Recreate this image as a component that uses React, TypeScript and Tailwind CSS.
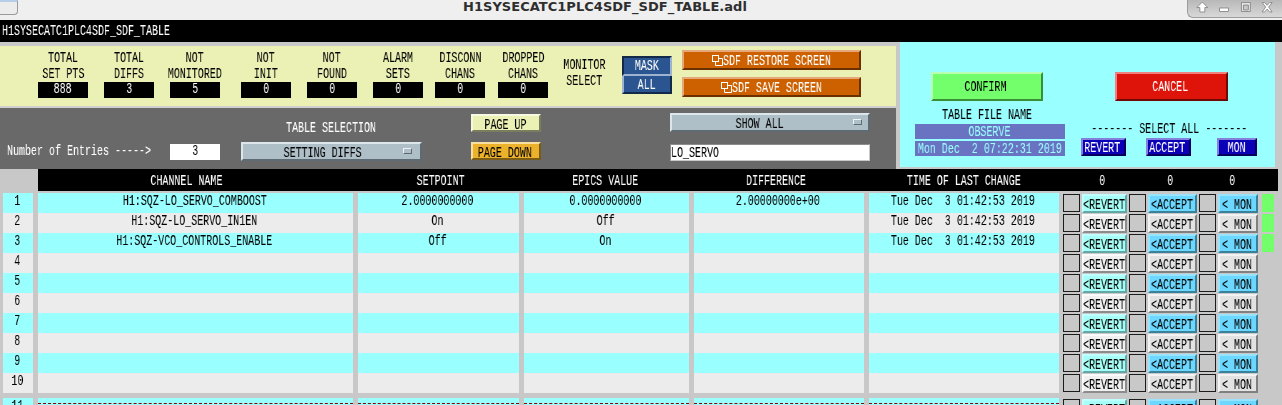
const T = ({ children, left }: { children: React.ReactNode; left?: boolean }) =>
    left ? (
        <span className="inline-block whitespace-pre origin-left scale-x-[.714] translate-y-px will-change-transform [-webkit-text-stroke:0.05px]">{children}</span>
    ) : (
        <span className="inline-flex w-0 justify-center">
            <span className="shrink-0 whitespace-pre scale-x-[.714] translate-y-px will-change-transform [-webkit-text-stroke:0.05px]">{children}</span>
        </span>
    )

const cloneIcon = (
    <svg width="11" height="11" viewBox="0 0 11 11" fill="none" stroke="white" strokeWidth="1" className="shrink-0">
        <rect x="0.5" y="0.5" width="6" height="6" />
        <path d="M7 3.5h3.5v7h-7V7" />
    </svg>
)

function Stat({ top, bottom, value, className }: { top: string; bottom: string; value: string; className: string }) {
    return (
        <div className={`w-[50px] flex flex-col items-center ${className}`}>
            <div className="h-[16px] leading-[16px]"><T>{top}</T></div>
            <div className="h-[16px] leading-[16px]"><T>{bottom}</T></div>
            <div className="mt-px w-[50px] h-[16px] bg-black text-white text-center leading-[13px]"><T>{value}</T></div>
        </div>
    )
}

const stats = [
    { top: "TOTAL", bottom: "SET PTS", value: "888", className: "ml-[38px]" },
    { top: "TOTAL", bottom: "DIFFS", value: "3", className: "ml-[16px]" },
    { top: "NOT", bottom: "MONITORED", value: "5", className: "ml-[16px]" },
    { top: "NOT", bottom: "INIT", value: "0", className: "ml-[21px]" },
    { top: "NOT", bottom: "FOUND", value: "0", className: "ml-[16px]" },
    { top: "ALARM", bottom: "SETS", value: "0", className: "ml-[16px]" },
    { top: "DISCONN", bottom: "CHANS", value: "0", className: "ml-[12px]" },
    { top: "DROPPED", bottom: "CHANS", value: "0", className: "ml-[13px]" },
]

const rows = [
    { n: "1", name: "H1:SQZ-LO_SERVO_COMBOOST", set: "2.0000000000", epics: "0.0000000000", diff: "2.00000000e+00", time: "Tue Dec  3 01:42:53 2019" },
    { n: "2", name: "H1:SQZ-LO_SERVO_IN1EN", set: "On", epics: "Off", diff: "", time: "Tue Dec  3 01:42:53 2019" },
    { n: "3", name: "H1:SQZ-VCO_CONTROLS_ENABLE", set: "Off", epics: "On", diff: "", time: "Tue Dec  3 01:42:53 2019" },
    { n: "4" }, { n: "5" }, { n: "6" }, { n: "7" }, { n: "8" }, { n: "9" }, { n: "10" },
]

function Box() {
    return <div className="w-[17px] h-[18px] mt-px bg-[#c8c8c8] border border-[#1c1c1c] shrink-0" />
}

function RowButtons({ odd }: { odd: boolean }) {
    const revert = odd
        ? "bg-[#a6fff6] border-t-[#c0ffff] border-l-[#c0ffff] border-r-[#5fa8a8] border-b-[#5fa8a8]"
        : "bg-[#f0f0f0] border-t-[#fafafa] border-l-[#fafafa] border-r-[#8c8c8c] border-b-[#8c8c8c]"
    const other = odd
        ? "bg-[#6cd8ff] border-t-[#98e4ff] border-l-[#98e4ff] border-r-[#38819c] border-b-[#38819c]"
        : "bg-[#e2e2e2] border-t-[#f2f2f2] border-l-[#f2f2f2] border-r-[#808080] border-b-[#808080]"
    return (
        <>
            <div className="ml-[4px]"><Box /></div>
            <div className={`ml-[2px] w-[45px] h-[19px] mt-px border-2 leading-[17px] ${revert}`}><span className="block -ml-px"><T left>{"<REVERT"}</T></span></div>
            <div className="ml-[2px]"><Box /></div>
            <div className={`ml-[2px] w-[49px] h-[19px] mt-px border-2 pl-px leading-[17px] ${other}`}><T left>{"<ACCEPT"}</T></div>
            <div className="ml-[2px]"><Box /></div>
            <div className={`ml-[2px] w-[40px] h-[19px] mt-px border-2 pl-[2px] leading-[17px] ${other}`}><T left>{"< MON"}</T></div>
        </>
    )
}

function Row({ row, odd, green, dashed }: { row: any; odd: boolean; green?: boolean; dashed?: boolean }) {
    const bg = odd ? "bg-[#99ffff]" : "bg-[#ececec]"
    const cell = `h-5 text-center overflow-hidden shrink-0 pr-[2px] ${bg}`
    const line = dashed ? "border-b border-dashed border-[#8b0000] h-[6px] -mr-[2px]" : ""
    return (
        <div className="flex h-5 leading-[14px] text-black">
            <div className={`ml-[3px] w-[30px] ${cell}`}><T>{row.n}</T></div>
            <div className={`ml-[5px] w-[315px] ${cell}`}>{dashed ? <div className={line} /> : <T>{row.name}</T>}</div>
            <div className={`ml-[5px] w-[161px] ${cell}`}>{dashed ? <div className={line} /> : <T>{row.set}</T>}</div>
            <div className={`ml-[5px] w-[165px] ${cell}`}>{dashed ? <div className={line} /> : <T>{row.epics}</T>}</div>
            <div className={`ml-[5px] w-[170px] ${cell}`}>{dashed ? <div className={line} /> : <T>{row.diff}</T>}</div>
            <div className={`ml-[5px] w-[190px] ${cell}`}>{dashed ? <div className={line} /> : <T>{row.time}</T>}</div>
            <RowButtons odd={odd} />
            {green && <div className="ml-[4px] w-[12px] h-[18px] mt-px bg-[#73ff6b]" />}
        </div>
    )
}

export default function App() {
    return (
        <div className="w-[1282px] h-[405px] overflow-hidden bg-[#c8c8c8] font-['Liberation_Mono',monospace] text-[14px] leading-[14px] text-black">
            {/* window title bar */}
            <div className="h-5 bg-[#efefef] flex items-start relative">
                <div className="w-[18px] h-[15px] bg-[#ececec] border-r border-b border-t-2 border-t-[#b5cde8] border-[#9a9a9a] rounded-br-sm shrink-0" />
                <div className="w-[1174px] text-center font-['DejaVu_Sans',sans-serif] font-bold text-[13px] leading-[14px] tracking-[0.03px] text-[#2e2e2e]">H1SYSECATC1PLC4SDF_SDF_TABLE.adl</div>
                <div className="absolute right-0 top-0 w-[95px] h-[18px] bg-gradient-to-b from-[#b8b8b8] to-[#d8d8d8] border-l border-b border-[#9c9c9c] rounded-bl-md flex items-center text-white">
                    <svg width="95" height="16" viewBox="0 0 95 16" fill="white" stroke="#6e6e6e" strokeWidth="0.7">
                        <path d="M14.500 1l5.500 5.500h-3v4.500h-5v-4.500h-3z" />
                        <rect x="32" y="7" width="9" height="3.500" />
                        <path fillRule="evenodd" d="M54 1.500h9v9h-9zM56 4v5h5V4z" fill="#e8e8e8" />
                        <path d="M75 1.500h2.500l2.500 2.800 2.500-2.800H85l-3.500 4.500 3.500 5h-2.500L80 8l-2.500 3H75l3.500-5z" />
                    </svg>
                </div>
            </div>

            {/* black name bar */}
            <div className="h-[22px] bg-black text-white leading-[20px] pl-[2px]"><T left>H1SYSECATC1PLC4SDF_SDF_TABLE</T></div>

            {/* control panels */}
            <div className="flex h-[125px]">
                <div className="w-[896px] pt-1">
                    <div className="h-[60px] bg-[#ebf1b5] flex pt-[3px]">
                        {stats.map((s) => <Stat key={s.top + s.bottom} {...s} />)}
                        <div className="ml-[10px] w-[52px] pt-[7px] flex flex-col items-center leading-[16px]">
                            <T>MONITOR</T>
                            <T>SELECT</T>
                        </div>
                        <div className="ml-[12px] w-[50px] pt-[7px]">
                            <div className="h-[20px] bg-[#2a5590] border-2 border-[#12294a] text-white text-center leading-[15px] border-r-[#9db3d0] border-b-[#9db3d0]"><T>MASK</T></div>
                            <div className="h-[18px] bg-[#2a5590] border-2 border-[#12294a] text-white text-center leading-[16px] border-l-[#9db3d0] border-t-0"><T>ALL</T></div>
                        </div>
                        <div className="ml-[10px] w-[179px] pt-px flex flex-col gap-[7px]">
                            <div className="h-[20px] bg-[#cd6100] border-2 border-t-[#e6a878] border-l-[#e6a878] border-r-[#6b3000] border-b-[#6b3000] text-white flex justify-center items-center">
                                {cloneIcon}<span className="w-[108px] h-[14px]"><T left>SDF RESTORE SCREEN</T></span>
                            </div>
                            <div className="h-[20px] bg-[#cd6100] border-2 border-t-[#e6a878] border-l-[#e6a878] border-r-[#6b3000] border-b-[#6b3000] text-white flex justify-center items-center">
                                {cloneIcon}<span className="w-[90px] h-[14px]"><T left>SDF SAVE SCREEN</T></span>
                            </div>
                        </div>
                    </div>
                    <div className="h-[2px] bg-[#d0d0d0]" />
                    <div className="h-[61px] bg-[#696969] flex">
                        <div className="w-[170px] pl-[7px] pt-[35px] text-white"><T left>Number of Entries -----&gt;</T></div>
                        <div className="w-[50px] h-[16px] mt-[36px] bg-white text-center leading-[12px]"><T>3</T></div>
                        <div className="ml-[21px] w-[181px] pt-[12px] flex flex-col">
                            <div className="text-white text-center"><T>TABLE SELECTION</T></div>
                            <div className="mt-[8px] h-[19px] bg-[#aebfc7] border-2 border-t-[#dde6ea] border-l-[#dde6ea] border-r-[#5e6b72] border-b-[#5e6b72] flex items-center relative justify-center pr-[18px]">
                                <T>SETTING DIFFS</T>
                                <span className="absolute right-[8px] top-[4px] w-[9px] h-[6px] bg-[#aebfc7] border border-t-[#eef2f4] border-l-[#eef2f4] border-r-[#5e6b72] border-b-[#5e6b72]" />
                            </div>
                        </div>
                        <div className="ml-[49px] w-[70px] pt-[6px] flex flex-col gap-[10px]">
                            <div className="h-[18px] bg-[#ebf1b5] border-2 border-t-[#f7f9e0] border-l-[#f7f9e0] border-r-[#7b7e5e] border-b-[#7b7e5e] text-center leading-[16px] pr-[2px]"><T>PAGE UP</T></div>
                            <div className="h-[18px] bg-[#edb22c] border-2 border-t-[#f8dea0] border-l-[#f8dea0] border-r-[#7b5c16] border-b-[#7b5c16] text-center leading-[16px] pr-[2px]"><T>PAGE DOWN</T></div>
                        </div>
                        <div className="ml-[129px] w-[200px] pt-[5px]">
                            <div className="h-[19px] bg-[#aebfc7] border-2 border-t-[#dde6ea] border-l-[#dde6ea] border-r-[#5e6b72] border-b-[#5e6b72] flex items-center justify-center relative pr-[20px]">
                                <T>SHOW ALL</T>
                                <span className="absolute right-[6px] top-[4px] w-[9px] h-[6px] bg-[#aebfc7] border border-t-[#eef2f4] border-l-[#eef2f4] border-r-[#5e6b72] border-b-[#5e6b72]" />
                            </div>
                            <div className="mt-[12px] h-[17px] bg-white border border-t-[#8c8c8c] border-l-[#8c8c8c] border-r-[#c8c8c8] border-b-[#c8c8c8] leading-[14px]"><T left>LO_SERVO</T></div>
                        </div>
                    </div>
                </div>

                <div className="ml-[4px] w-[375px] h-[125px] bg-[#99ffff] flex pl-[15px] pt-[30px]">
                    <div className="w-[150px] flex flex-col">
                        <div className="ml-[16px] w-[112px] h-[29px] bg-[#73ff6b] border-2 border-t-[#b8ffb4] border-l-[#b8ffb4] border-r-[#3a8f36] border-b-[#3a8f36] text-center leading-[24px] pr-[4px]"><T>CONFIRM</T></div>
                        <div className="mt-[6px] h-[16px] text-center leading-[14px] pr-[6px]"><T>TABLE FILE NAME</T></div>
                        <div className="mt-[1px] h-[15px] bg-[#6a73c1] text-[#99ffff] text-center leading-[14px] pr-px"><T>OBSERVE</T></div>
                        <div className="mt-[2px] h-[15px] bg-[#6a73c1] text-[#99ffff] text-center leading-[14px] pr-px"><T>Mon Dec  2 07:22:31 2019</T></div>
                    </div>
                    <div className="ml-[16px] w-[176px] flex flex-col">
                        <div className="ml-[34px] w-[113px] h-[29px] bg-[#de1309] border-2 border-t-[#f08080] border-l-[#f08080] border-r-[#6f0905] border-b-[#6f0905] text-white text-center leading-[24px] pr-[2px]"><T>CANCEL</T></div>
                        <div className="mt-[20px] h-[16px] text-center leading-[14px]"><T>------- SELECT ALL -------</T></div>
                        <div className="mt-[1px] flex text-white">
                            <div className="w-[45px] h-[18px] bg-[#0a00b8] border-2 border-t-[#8480dc] border-l-[#8480dc] border-r-[#05005c] border-b-[#05005c] text-center leading-[14px] pr-[3px]"><T>REVERT</T></div>
                            <div className="ml-[20px] w-[45px] h-[18px] bg-[#0a00b8] border-2 border-t-[#8480dc] border-l-[#8480dc] border-r-[#05005c] border-b-[#05005c] text-center leading-[14px] pr-[3px]"><T>ACCEPT</T></div>
                            <div className="ml-[26px] w-[40px] h-[18px] bg-[#0a00b8] border-2 border-t-[#8480dc] border-l-[#8480dc] border-r-[#05005c] border-b-[#05005c] text-center leading-[14px]"><T>MON</T></div>
                        </div>
                    </div>
                </div>
            </div>

            {/* table */}
            <div className="mt-[2px] ml-[38px] w-[1240px] h-[22px] bg-black text-white flex text-center leading-[22px]">
                <div className="w-[315px] pr-[19px]"><T>CHANNEL NAME</T></div>
                <div className="ml-[5px] w-[161px] pl-[5px]"><T>SETPOINT</T></div>
                <div className="ml-[5px] w-[165px] pr-[3px]"><T>EPICS VALUE</T></div>
                <div className="ml-[5px] w-[170px] pr-[6px]"><T>DIFFERENCE</T></div>
                <div className="ml-[5px] w-[190px]"><T>TIME OF LAST CHANGE</T></div>
                <div className="ml-[21px] w-[45px]"><T>0</T></div>
                <div className="ml-[23px] w-[45px]"><T>0</T></div>
                <div className="ml-[17px] w-[45px]"><T>0</T></div>
            </div>
            <div className="h-[2px]" />
            {rows.map((r, i) => <Row key={r.n} row={r} odd={i % 2 === 0} green={i < 3} />)}
            <div className="h-[5px]" />
            <Row row={{ n: "11" }} odd dashed />
        </div>
    )
}
